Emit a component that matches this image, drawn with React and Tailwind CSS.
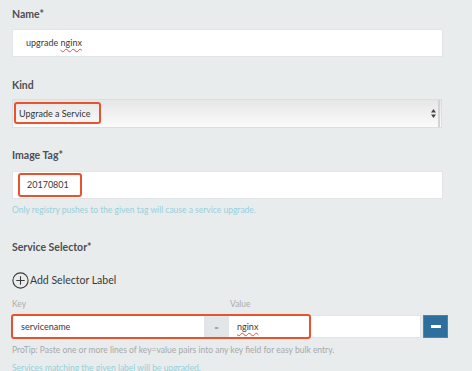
import React from 'react';

const Label = ({ children, className = '' }) => (
    <div className={`text-[10.5px] leading-4 font-bold text-[#4d4f52] ${className}`}>{children}</div>
);

const Mark = ({ className }) => (
    <div className={`absolute border-2 border-[#e8532e] rounded-[3px] pointer-events-none ${className}`}></div>
);

export default function App() {
    return (
        <div className="w-[472px] h-[371px] overflow-hidden bg-[#e9eced] font-['Lato',sans-serif] pl-3 pt-[6px]">
            <div className="w-[431px]">
                <Label className="mb-[7px]">Name*</Label>
                <div className="h-[28px] bg-white border border-[#e2e5e7] flex items-center pl-[13px] text-[9px] text-[#3a3a3a]">
                    upgrade&nbsp;<span className="underline decoration-wavy decoration-[#e0503a] underline-offset-2">nginx</span>
                </div>

                <Label className="mt-[20px] mb-[6px]">Kind</Label>
                <div className="relative h-[29px] w-[430px] border border-[#dcdfe1] bg-gradient-to-b from-[#e6e6e6] to-[#fbfbfb] flex items-center pl-[6px] text-[9px] text-[#333]">
                    Upgrade a Service
                    <div className="ml-auto h-full w-[12px] border-r-2 border-[#d3d3d3] flex items-center justify-center mr-[1px]">
                        <svg width="5" height="9" viewBox="0 0 5 9" fill="#444">
                            <path d="M2.5 0L5 3.5H0z" />
                            <path d="M2.5 9L5 5.5H0z" />
                        </svg>
                    </div>
                    <Mark className="left-[1px] top-[2px] w-[87px] h-[22px]" />
                </div>

                <Label className="mt-[19px] mb-[8px]">Image Tag*</Label>
                <div className="relative h-[28px] bg-white border border-[#e2e5e7] flex items-center pl-[14px] text-[9px] text-[#3a3a3a]">
                    20170801
                    <Mark className="left-[5px] top-[1px] w-[64px] h-[24px]" />
                </div>
                <div className="mt-[4px] text-[8.5px] leading-[14px] text-[#97d0d8]">
                    Only registry pushes to the given tag will cause a service upgrade.
                </div>

                <Label className="mt-[22px]">Service Selector*</Label>

                <div className="mt-[17px] flex items-center gap-[1px] text-[10.5px] text-[#3a3a3a]">
                    <svg width="17" height="17" viewBox="0 0 17 17" fill="none" stroke="#3a3a3a" strokeWidth="1.1">
                        <circle cx="8.5" cy="8.5" r="7.6" />
                        <path d="M8.5 4.3v8.4M4.3 8.5h8.4" />
                    </svg>
                    <span>Add Selector Label</span>
                </div>

                <div className="mt-[9px] flex text-[8.5px] leading-3 text-[#a9acae]">
                    <span className="w-[218px]">Key</span>
                    <span>Value</span>
                </div>

                <div className="relative mt-[5px] flex items-center h-[23px] w-[436px]">
                    <div className="w-[193px] h-full bg-white border border-[#e2e5e7] flex items-center pl-[8px] text-[9px] text-[#3a3a3a]">
                        servicename
                    </div>
                    <div className="w-[23px] h-full bg-[#e3e6e8] border-y border-[#e2e5e7] flex items-center justify-center text-[8px] text-[#777]">
                        =
                    </div>
                    <div className="w-[193px] h-full bg-white border border-[#e2e5e7] flex items-center pl-[8px] text-[9px] text-[#3a3a3a]">
                        <span className="underline decoration-wavy decoration-[#e0503a] underline-offset-2">nginx</span>
                    </div>
                    <button className="ml-[2px] w-[25px] h-[23px] bg-[#2e6f9e] border border-[#4a86b3] flex items-center justify-center">
                        <span className="block w-[10px] h-[3px] bg-white"></span>
                    </button>
                    <Mark className="-left-[1px] -top-[1px] w-[300px] h-[25px]" />
                </div>

                <div className="mt-[5px] text-[8.5px] leading-[14px] text-[#a6a9ab] whitespace-nowrap">
                    ProTip: Paste one or more lines of key=value pairs into any key field for easy bulk entry.
                </div>
                <div className="mt-[4px] text-[8.5px] leading-[14px] text-[#97d0d8]">
                    Services matching the given label will be upgraded.
                </div>
            </div>
        </div>
    );
}
